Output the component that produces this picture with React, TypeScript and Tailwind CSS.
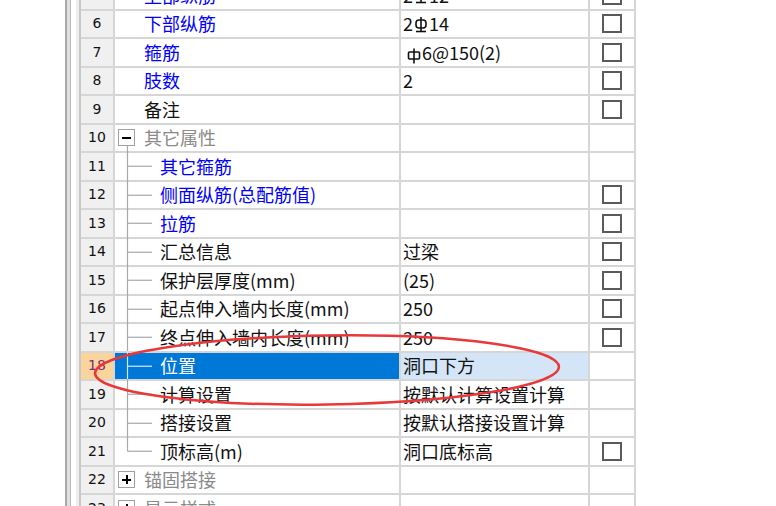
import React from 'react';

type Kind = 'blue' | 'black' | 'gray';
type Tree = 'none' | 'minus' | 'plus' | 'child' | 'last';

type Row = {
  no: number;
  name: string;
  kind: Kind;
  tree: Tree;
  value?: React.ReactNode;
  check?: boolean;
  selected?: boolean;
};

// 钢筋符号 (三级钢 / 一级钢)
const SteelIII: React.FC = () => (
  <svg width="14" height="18" viewBox="0 0 14 18" className="inline-block mx-[1px] -mb-[2px]">
    <rect x="2" y="4" width="10" height="8" rx="3" fill="none" stroke="#111" strokeWidth="1.6" />
    <line x1="7" y1="1" x2="7" y2="15" stroke="#111" strokeWidth="1.6" />
    <line x1="2" y1="15.5" x2="12" y2="15.5" stroke="#111" strokeWidth="1.6" />
  </svg>
);

const SteelI: React.FC = () => (
  <svg width="14" height="18" viewBox="0 0 14 18" className="inline-block mr-[1px] -mb-[2px]">
    <rect x="1.5" y="5" width="11" height="7" rx="1" fill="none" stroke="#111" strokeWidth="1.6" />
    <line x1="7" y1="1.5" x2="7" y2="16.5" stroke="#111" strokeWidth="1.6" />
  </svg>
);

const rows: Row[] = [
  { no: 5, name: '上部纵筋', kind: 'blue', tree: 'none', value: <>2<SteelIII />12</>, check: true },
  { no: 6, name: '下部纵筋', kind: 'blue', tree: 'none', value: <>2<SteelIII />14</>, check: true },
  { no: 7, name: '箍筋', kind: 'blue', tree: 'none', value: <span className="pl-[4px]"><SteelI />6@150(2)</span>, check: true },
  { no: 8, name: '肢数', kind: 'blue', tree: 'none', value: '2', check: true },
  { no: 9, name: '备注', kind: 'black', tree: 'none', check: true },
  { no: 10, name: '其它属性', kind: 'gray', tree: 'minus' },
  { no: 11, name: '其它箍筋', kind: 'blue', tree: 'child' },
  { no: 12, name: '侧面纵筋(总配筋值)', kind: 'blue', tree: 'child', check: true },
  { no: 13, name: '拉筋', kind: 'blue', tree: 'child', check: true },
  { no: 14, name: '汇总信息', kind: 'black', tree: 'child', value: '过梁', check: true },
  { no: 15, name: '保护层厚度(mm)', kind: 'black', tree: 'child', value: '(25)', check: true },
  { no: 16, name: '起点伸入墙内长度(mm)', kind: 'black', tree: 'child', value: '250', check: true },
  { no: 17, name: '终点伸入墙内长度(mm)', kind: 'black', tree: 'child', value: '250', check: true },
  { no: 18, name: '位置', kind: 'black', tree: 'child', value: '洞口下方', selected: true },
  { no: 19, name: '计算设置', kind: 'black', tree: 'child', value: '按默认计算设置计算' },
  { no: 20, name: '搭接设置', kind: 'black', tree: 'child', value: '按默认搭接设置计算' },
  { no: 21, name: '顶标高(m)', kind: 'black', tree: 'last', value: '洞口底标高', check: true },
  { no: 22, name: '锚固搭接', kind: 'gray', tree: 'plus' },
  { no: 23, name: '显示样式', kind: 'gray', tree: 'plus' },
];

const kindColor: Record<Kind, string> = {
  blue: 'text-[#0000ff]',
  black: 'text-[#111111]',
  gray: 'text-[#8a8a8a]',
};

const ToggleBox: React.FC<{ plus?: boolean }> = ({ plus }) => (
  <div className="relative w-[17px] h-[17px] border border-[#a0a0a0] bg-white flex items-center justify-center shrink-0">
    <div className="w-[9px] h-[2px] bg-black" />
    {plus && <div className="absolute w-[2px] h-[9px] bg-black" />}
  </div>
);

const TreeLines: React.FC<{ tree: Tree; selected?: boolean }> = ({ tree, selected }) => {
  const c = selected ? '#d8e6f5' : '#a8a8a8';
  if (tree === 'child' || tree === 'last') {
    return (
      <svg className="absolute left-0 top-0 overflow-visible" width="40" height="100%">
        <line x1="12.5" y1="-2" x2="12.5" y2={tree === 'last' ? '50%' : '110%'} stroke={c} strokeWidth="1.2" />
        <line x1="12.5" y1="50%" x2="37" y2="50%" stroke={c} strokeWidth="1.2" />
      </svg>
    );
  }
  if (tree === 'minus') {
    return (
      <svg className="absolute left-0 top-0 overflow-visible" width="40" height="100%">
        <line x1="12.5" y1="70%" x2="12.5" y2="110%" stroke={c} strokeWidth="1.2" />
      </svg>
    );
  }
  return null;
};

const Checkbox: React.FC = () => (
  <div className="w-[20px] h-[19px] border-2 border-[#5a5a5a] bg-white" />
);

const GridRow: React.FC<{ row: Row }> = ({ row }) => {
  const indent = row.tree === 'child' || row.tree === 'last' ? 'pl-[45px]' : 'pl-[29px]';
  return (
    <div className="flex h-[28.5px] border-b-2 border-[#d6d6d6]">
      <div
        className={`w-[34px] shrink-0 border-r-2 border-[#d6d6d6] flex items-center justify-center text-[14px] ${
          row.selected ? 'bg-[#f9d59b] text-[#7b2d7b]' : 'bg-[#f0f0f0] text-[#111]'
        }`}
        style={{ fontFamily: '"DejaVu Sans", sans-serif' }}
      >
        {row.no}
      </div>
      <div
        className={`relative w-[286px] shrink-0 border-r-2 border-[#d6d6d6] flex items-center text-[18px] whitespace-nowrap ${indent} ${
          row.selected ? 'bg-[#0078d7] text-white' : kindColor[row.kind]
        }`}
      >
        <TreeLines tree={row.tree} selected={row.selected} />
        {(row.tree === 'minus' || row.tree === 'plus') && (
          <div className="absolute left-[3px] top-0 bottom-0 flex items-center">
            <ToggleBox plus={row.tree === 'plus'} />
          </div>
        )}
        {row.name}
      </div>
      <div
        className={`w-[189px] shrink-0 border-r-2 border-[#d6d6d6] flex items-center pl-[2px] text-[18px] text-[#111] whitespace-nowrap ${
          row.selected ? 'bg-[#d3e5f7]' : 'bg-white'
        }`}
      >
        {row.value}
      </div>
      <div className="w-[46px] shrink-0 border-r-2 border-[#d6d6d6] flex items-center justify-center bg-white">
        {row.check && <Checkbox />}
      </div>
    </div>
  );
};

const App: React.FC = () => {
  return (
    <div
      className="relative w-[776px] h-[506px] overflow-hidden bg-white flex"
      style={{ fontFamily: '"Noto Sans CJK SC", "Liberation Sans", sans-serif' }}
    >
      {/* window frame on the left */}
      <div className="w-[65px] shrink-0 bg-white" />
      <div className="w-[2px] shrink-0 bg-[#a8a8a8]" />
      <div className="w-[3px] shrink-0 bg-[#e0e0e0]" />
      <div className="w-[1px] shrink-0 bg-[#b8b8b8]" />
      <div className="w-[5px] shrink-0 bg-white" />
      <div className="w-[3px] shrink-0 bg-[#ededed]" />
      <div className="w-[2px] shrink-0 bg-[#c8c8c8]" />

      {/* property grid */}
      <div className="flex flex-col mt-[-18px] shrink-0">
        {rows.map((r) => (
          <GridRow key={r.no} row={r} />
        ))}
      </div>

      {/* red hand-drawn annotation */}
      <svg className="absolute inset-0 pointer-events-none" width="776" height="506">
        <ellipse
          cx="327"
          cy="370"
          rx="232"
          ry="34.5"
          fill="none"
          stroke="#e8383a"
          strokeWidth="2.5"
          transform="rotate(-0.8 327 370)"
        />
      </svg>
    </div>
  );
};

export default App;
